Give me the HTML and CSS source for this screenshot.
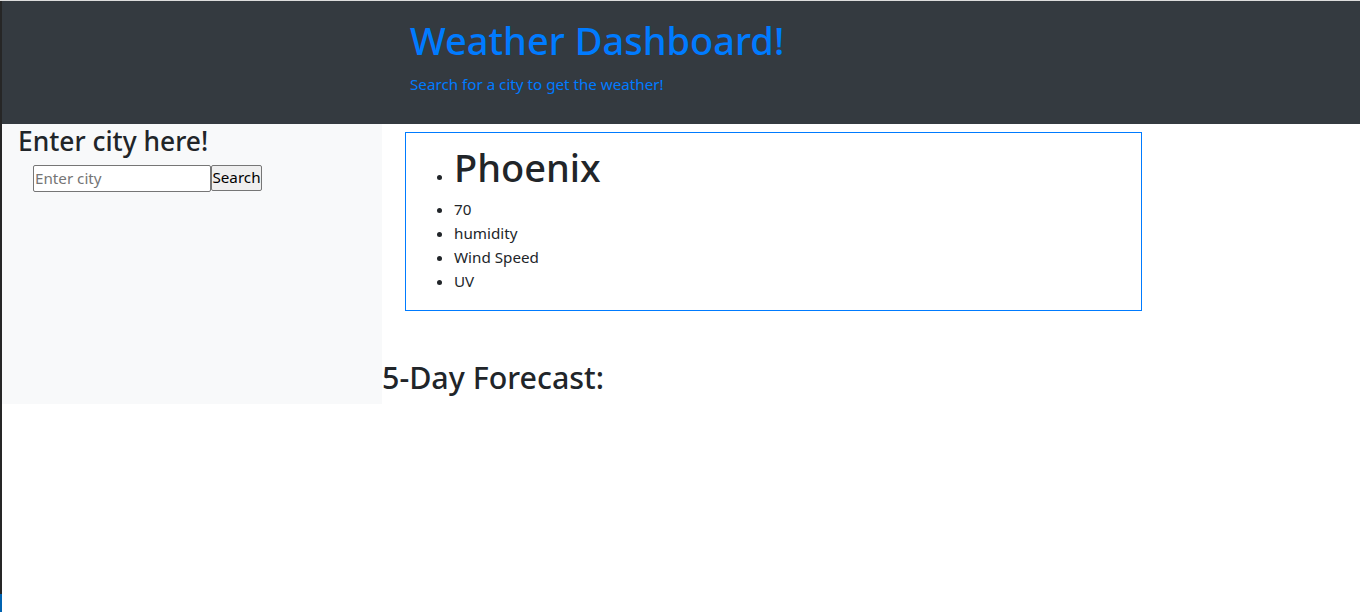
FILE: index.html
```html
<!DOCTYPE html>
<html lang="en">
<head>
<meta charset="utf-8">
<title>Weather Dashboard</title>
<link rel="stylesheet" href="styles.css">
</head>
<body>
<div class="page">
  <header class="hero">
    <h1 class="hero-title">Weather Dashboard!</h1>
    <p class="hero-sub">Search for a city to get the weather!</p>
  </header>
  <div class="layout">
    <aside class="sidebar">
      <h3 class="side-title">Enter city here!</h3>
      <form class="search-form">
        <input class="city-input" type="text" placeholder="Enter city"><button class="search-btn" type="button">Search</button>
      </form>
    </aside>
    <main class="main-col">
      <div class="current-box">
        <ul class="current-list">
          <li><h1 class="city-name">Phoenix</h1></li>
          <li>70</li>
          <li>humidity</li>
          <li>Wind Speed</li>
          <li>UV</li>
        </ul>
      </div>
      <h2 class="forecast-title">5-Day Forecast:</h2>
    </main>
  </div>
</div>
</body>
</html>
```

FILE: styles.css
```css
* { box-sizing: border-box; }
html, body { margin: 0; padding: 0; }
body {
  background: #ffffff;
  color: #212529;
  font-family: "Noto Sans", "Open Sans", sans-serif;
  font-size: 15.2px;
  line-height: 24px;
}
.page {
  min-height: 612px;
  border-left: 2px solid #262626;
  border-image: linear-gradient(to bottom, #dcdcdc 1px, #262626 1px, #262626 593px, #0063b1 593px) 1;
  border-top: 1px solid #dcdcdc;
}
.hero {
  background: #343a40;
  padding: 15px 0 12px 408px;
}
.hero-title {
  margin: 0 0 8px;
  font-size: 38px;
  font-weight: 500;
  line-height: 48px;
  color: #007bff;
}
.hero-sub {
  margin: 0 0 16px;
  color: #007bff;
  font-size: 15.2px;
  line-height: 24px;
}
.layout {
  display: flex;
  align-items: stretch;
}
.sidebar {
  width: 380px;
  background: #f8f9fa;
  padding: 1px 16px 0;
}
.side-title {
  margin: 0 0 6px;
  font-size: 26.4px;
  font-weight: 500;
  line-height: 33.6px;
}
.search-form {
  display: flex;
  margin-left: 15px;
}
.city-input {
  width: 178px;
  height: 27px;
  font: inherit;
  font-size: 15.2px;
  padding: 0 1px;
  border: 1px solid #767676;
  border-radius: 2px;
  background: #fff;
  color: #212529;
}
.city-input::placeholder { color: #757575; }
.search-btn {
  width: 51px;
  height: 26px;
  font: inherit;
  font-size: 15.2px;
  line-height: 1;
  padding: 0;
  border: 1px solid #767676;
  border-radius: 2px;
  background: #efefef;
  color: #000;
}
.main-col {
  width: 783px;
}
.current-box {
  margin: 8px 23px 48px;
  border: 1px solid #007bff;
  padding: 10px 8px 9px;
}
.current-list {
  margin: 0 0 8px;
  padding-left: 40px;
}
.city-name {
  margin: 0 0 6px;
  font-size: 38px;
  font-weight: 500;
  line-height: 48px;
}
.forecast-title {
  margin: 0 0 7px;
  font-size: 30.4px;
  font-weight: 500;
  line-height: 38.4px;
}
```
